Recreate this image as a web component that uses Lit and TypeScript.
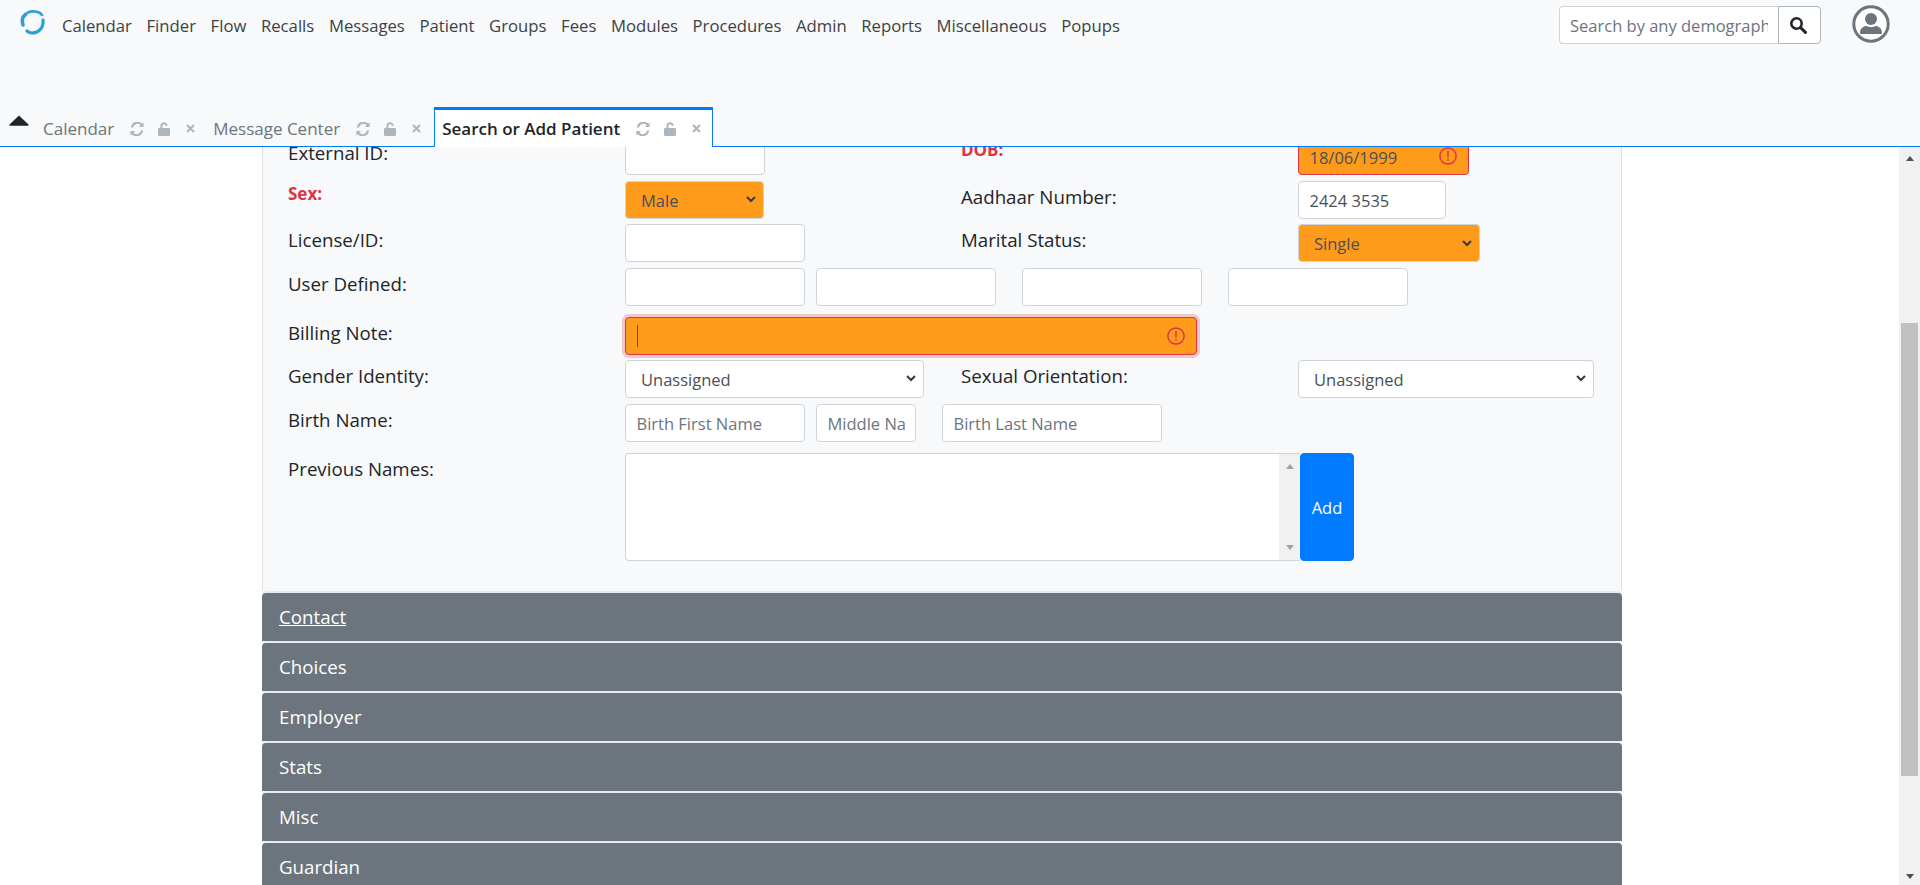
import { LitElement, html, css, svg } from "lit";
import { customElement } from "lit/decorators.js";

const NAV = ["Calendar", "Finder", "Flow", "Recalls", "Messages", "Patient", "Groups", "Fees", "Modules", "Procedures", "Admin", "Reports", "Miscellaneous", "Popups"];
const BARS = ["Contact", "Choices", "Employer", "Stats", "Misc", "Guardian"];

const syncIcon = svg`<path d="M12.2 1.8A6.500 6.500 0 0 0 .9 5.400h2.100a4.500 4.500 0 0 1 7.700-2.100L9 5h4.600V.4zM1.800 12.200A6.500 6.500 0 0 0 13.100 8.600H11a4.500 4.500 0 0 1-7.700 2.100L5 9H.4v4.600z"/>`;
const lockIcon = svg`<path d="M1.300 6h9.400A1.300 1.300 0 0 1 12 7.300v5.400A1.300 1.300 0 0 1 10.700 14H1.300A1.300 1.300 0 0 1 0 12.700V7.300A1.300 1.300 0 0 1 1.300 6zM2.400 6V3.800a3.700 3.700 0 0 1 7.200-1.100v1H7.600v-.6A1.700 1.700 0 0 0 4.400 3.800V6z"/>`;
const warnIcon = html`<svg class="warn" viewBox="0 0 12 12"><circle cx="6" cy="6" r="5.400" fill="none" stroke="#dc3545"/><path d="M6 3v3.600" stroke="#dc3545" stroke-linecap="round" fill="none"/><circle cx="6" cy="8.600" r=".6" fill="#dc3545"/></svg>`;

@customElement("app-root")
export class AppRoot extends LitElement {
  static styles = css`
    :host {
      display: block;
      height: 885px;
      overflow: hidden;
      font-family: "Open Sans", "Liberation Sans", sans-serif;
      font-size: 16.5px;
      line-height: 24px;
      color: #212529;
      background: #fff;
    }
    * {
      box-sizing: border-box;
    }
    .navbar {
      height: 147px;
      background: #f8f9fa;
      border-bottom: 1px solid #007bff;
      display: flex;
      flex-direction: column;
    }
    .topbar {
      height: 107px;
      display: flex;
      align-items: flex-start;
    }
    .logo {
      width: 27px;
      height: 27px;
      margin: 9px 0 0 19px;
    }
    .menu {
      display: flex;
      gap: 14.6px;
      margin: 14px 0 0 16px;
      flex: 1;
      color: #3d4145;
      font-size: 16.7px;
    }
    .search {
      display: flex;
      margin-top: 6px;
      width: 262px;
      height: 38px;
    }
    .search input {
      flex: 1;
      min-width: 0;
      border: 1px solid #ced4da;
      border-right: 0;
      border-radius: 4px 0 0 4px;
      padding: 7px 10px 5px;
      font: inherit;
      background: #fff;
    }
    .search input::placeholder {
      color: #6c757d;
    }
    .search button {
      width: 43px;
      border: 1px solid #adb5bd;
      border-radius: 0 4px 4px 0;
      background: #fff;
      padding: 0 3px 0 0;
      display: flex;
      align-items: center;
      justify-content: center;
    }
    .avatar {
      width: 38px;
      height: 38px;
      margin: 5px 30px 0 31px;
    }
    .tabs {
      height: 39px;
      display: flex;
      align-items: flex-start;
      font-size: 17px;
    }
    .caret {
      width: 20px;
      height: 11px;
      margin: 8px 4px 0 9px;
    }
    .tab {
      display: flex;
      align-items: center;
      height: 40px;
      padding: 3px 8px 0 10px;
      color: #6c757d;
      white-space: nowrap;
    }
    .tab.active {
      margin-left: 5px;
      padding: 0 12px 0 7px;
      background: #fff;
      border: 1px solid #007bff;
      border-top-width: 3px;
      border-bottom: 0;
      color: #212529;
      font-weight: 600;
      font-size: 17px;
      width: 279px;
    }
    .tab svg {
      fill: #adb5bd;
      flex: none;
    }
    .tab .sync {
      width: 14px;
      height: 14px;
      margin-left: 16px;
    }
    .tab .lock {
      width: 12px;
      height: 14px;
      margin-left: 14px;
    }
    .tab .x {
      width: 9px;
      height: 9px;
      margin-left: 16px;
    }
    .body {
      height: 738px;
      display: flex;
    }
    .main {
      flex: 1;
      min-width: 0;
      overflow: hidden;
      padding: 0 277px 0 262px;
    }
    .panel {
      margin-top: -10px;
      height: 454px;
      background: #f8f9fa;
      border: 1px solid #dee2e6;
      border-width: 0 1px;
      padding-left: 25px;
      display: flex;
      flex-direction: column;
    }
    .row {
      display: grid;
      grid-template-columns: 337px 336px 337px 1fr;
      margin-bottom: 5.6px;
    }
    .row.spaced {
      margin-top: 5.6px;
      margin-bottom: 5px;
    }
    .lbl {
      padding-top: 4px;
      white-space: nowrap;
      font-size: 18.7px;
    }
    .lbl.req {
      padding-top: 1px;
      color: #dc3545;
      font-weight: 700;
      font-size: 17px;
    }
    .wide {
      grid-column: 2 / span 3;
      display: flex;
    }
    .field {
      position: relative;
    }
    .field > .fc {
      width: 100%;
    }
    input.fc,
    select.fc {
      display: block;
      height: 38px;
      padding: 7px 10.5px 5px;
      font: inherit;
      color: #495057;
      background-color: #fff;
      border: 1px solid #ced4da;
      border-radius: 4px;
      outline: none;
    }
    select.fc {
      appearance: none;
      padding-left: 15px;
      background-image: url("data:image/svg+xml,%3Csvg xmlns='http://www.w3.org/2000/svg' width='10' height='7'%3E%3Cpath d='M1 1l4 4 4-4' fill='none' stroke='%23343a40' stroke-width='2'/%3E%3C/svg%3E");
      background-repeat: no-repeat;
      background-position: right 7px center;
    }
    input.fc::placeholder {
      color: #6c757d;
    }
    .fc.orange {
      background-color: #ff9b1b;
    }
    .fc.bad {
      border-color: #dc3545;
    }
    .fc.ring {
      box-shadow: 0 0 0 3px rgba(220, 53, 69, 0.25);
    }
    .warn {
      position: absolute;
      right: 12px;
      top: 10px;
      width: 18px;
      height: 18px;
    }
    .cursor {
      position: absolute;
      left: 12px;
      top: 8px;
      width: 1px;
      height: 22px;
      background: #495057;
    }
    .w140 { width: 140px; }
    .w139 { width: 139px; }
    .w148 { width: 148px; }
    .w171 { width: 171px; }
    .w180 { width: 180px; }
    .w181 { width: 181.5px; }
    .w296 { width: 296px; }
    .w299 { width: 299px; }
    .w572 { width: 572px; }
    .w100 { width: 100px; }
    .w220 { width: 220px; }
    .ml11 { margin-left: 11px; }
    .ml26 { margin-left: 26px; }
    .prev {
      display: grid;
      grid-template-columns: 337px 1fr;
      margin-top: 5.6px;
    }
    .prev-box {
      display: flex;
      height: 108px;
    }
    .area {
      width: 675px;
      background: #fff;
      border: 1px solid #ced4da;
      border-right: 0;
      border-radius: 4px 0 0 4px;
      display: flex;
      justify-content: flex-end;
    }
    .area-bar {
      width: 21px;
      background: #f1f1f1;
      display: flex;
      flex-direction: column;
      justify-content: space-between;
      align-items: center;
      padding: 10px 0;
    }
    .tri-up,
    .tri-down {
      width: 0;
      height: 0;
      border-left: 4.500px solid transparent;
      border-right: 4.500px solid transparent;
    }
    .tri-up {
      border-bottom: 5px solid #a3a3a3;
    }
    .tri-down {
      border-top: 5px solid #a3a3a3;
    }
    .add {
      width: 54px;
      background: #007bff;
      border: 1px solid #007bff;
      border-radius: 4px;
      color: #fff;
      font: inherit;
      padding: 2px 0 0;
    }
    .accordion {
      display: flex;
      flex-direction: column;
      margin-top: 2px;
    }
    .bar {
      height: 48px;
      margin-bottom: 2px;
      background: #6c757d;
      border-radius: 4px 4px 0 0;
      box-shadow: 0 -2px 0 #e9ecef;
      color: #fff;
      padding: 12px 17px;
      flex: none;
      font-size: 18.7px;
    }
    .bar.link {
      text-decoration: underline;
    }
    .scrollbar {
      width: 21px;
      background: #f1f1f1;
      display: flex;
      flex-direction: column;
      align-items: center;
    }
    .scrollbar .top,
    .scrollbar .bottom {
      height: 17px;
      display: flex;
      align-items: center;
      justify-content: center;
      flex: none;
    }
    .scrollbar .tri-up {
      border-bottom-color: #505050;
      margin-top: 6px;
    }
    .scrollbar .tri-down {
      border-top-color: #505050;
      margin-top: -1px;
    }
    .gap-a {
      height: 159px;
    }
    .thumb {
      width: 17px;
      height: 453px;
      background: #c1c1c1;
    }
    .gap-b {
      flex: 1;
    }
  `;

  render() {
    return html`
      <div class="navbar">
        <div class="topbar">
          <svg class="logo" viewBox="0 0 27 27" fill="none" stroke="#2a9fd8" stroke-linecap="round">
            <path d="M4 16C2.500 11 4 7 7 5" stroke-width="3.500" />
            <path d="M9 3.500C13 1.500 20 2 23 6" stroke-width="2.600" />
            <path d="M24 11C25 18 20 24 13 24 11 24 9.500 23.500 8 22" stroke-width="3.200" />
          </svg>
          <div class="menu">${NAV.map((n) => html`<span>${n}</span>`)}</div>
          <div class="search">
            <input placeholder="Search by any demographics" />
            <button aria-label="Search">
              <svg width="18" height="18" viewBox="0 0 18 18" fill="none" stroke="#212529">
                <circle cx="7.500" cy="7.500" r="5.200" stroke-width="2.600" />
                <path d="M11.500 11.500L16.400 16.400" stroke-width="3" stroke-linecap="round" />
              </svg>
            </button>
          </div>
          <svg class="avatar" viewBox="0 0 38 38">
            <circle cx="19" cy="19" r="17.200" fill="#fff" stroke="#6c757d" stroke-width="3" />
            <circle cx="19" cy="14" r="6" fill="#6c757d" />
            <path d="M8 28c0-5 4-7 6-7 3 1.500 7 1.500 10 0 2 0 6 2 6 7a1 1 0 0 1-1 1H9a1 1 0 0 1-1-1z" fill="#6c757d" />
          </svg>
        </div>
        <div class="tabs">
          <svg class="caret" viewBox="0 0 20 11"><path d="M10 .5L19.500 9.500a.8.800 0 0 1-.6 1.300H1.100a.8.800 0 0 1-.6-1.300z" fill="#212529" /></svg>
          ${this.tab("Calendar")} ${this.tab("Message Center")} ${this.tab("Search or Add Patient", true)}
        </div>
      </div>
      <div class="body">
        <div class="main">
          <div class="panel">
            <div class="row">
              <div class="lbl">External ID:</div>
              <div class="field w140"><input class="fc" /></div>
              <div class="lbl req">DOB:</div>
              <div class="field w171">
                <input class="fc orange bad" value="18/06/1999" />
                ${warnIcon}
              </div>
            </div>
            <div class="row">
              <div class="lbl req">Sex:</div>
              <div class="field w139"><select class="fc orange"><option>Male</option></select></div>
              <div class="lbl">Aadhaar Number:</div>
              <div class="field w148"><input class="fc" value="2424 3535" /></div>
            </div>
            <div class="row">
              <div class="lbl">License/ID:</div>
              <div class="field w180"><input class="fc" /></div>
              <div class="lbl">Marital Status:</div>
              <div class="field w181"><select class="fc orange"><option>Single</option></select></div>
            </div>
            <div class="row">
              <div class="lbl">User Defined:</div>
              <div class="wide">
                <input class="fc w180" />
                <input class="fc w180 ml11" />
                <input class="fc w180 ml26" />
                <input class="fc w180 ml26" />
              </div>
            </div>
            <div class="row spaced">
              <div class="lbl">Billing Note:</div>
              <div class="wide">
                <div class="field w572">
                  <input class="fc orange bad ring" />
                  <span class="cursor"></span>
                  ${warnIcon}
                </div>
              </div>
            </div>
            <div class="row">
              <div class="lbl">Gender Identity:</div>
              <div class="field w299"><select class="fc"><option>Unassigned</option></select></div>
              <div class="lbl">Sexual Orientation:</div>
              <div class="field w296"><select class="fc"><option>Unassigned</option></select></div>
            </div>
            <div class="row">
              <div class="lbl">Birth Name:</div>
              <div class="wide">
                <input class="fc w180" placeholder="Birth First Name" />
                <input class="fc w100 ml11" placeholder="Middle Name" />
                <input class="fc w220 ml26" placeholder="Birth Last Name" />
              </div>
            </div>
            <div class="prev">
              <div class="lbl">Previous Names:</div>
              <div class="prev-box">
                <div class="area">
                  <div class="area-bar"><span class="tri-up"></span><span class="tri-down"></span></div>
                </div>
                <button class="add">Add</button>
              </div>
            </div>
          </div>
          <div class="accordion">
            ${BARS.map((b, i) => html`<div class="bar ${i === 0 ? "link" : ""}">${b}</div>`)}
          </div>
        </div>
        <div class="scrollbar">
          <div class="top"><span class="tri-up"></span></div>
          <div class="gap-a"></div>
          <div class="thumb"></div>
          <div class="gap-b"></div>
          <div class="bottom"><span class="tri-down"></span></div>
        </div>
      </div>
    `;
  }

  tab(label: string, active = false) {
    return html`
      <div class="tab ${active ? "active" : ""}">
        <span>${label}</span>
        <svg class="sync" viewBox="0 0 14 14">${syncIcon}</svg>
        <svg class="lock" viewBox="0 0 12 14">${lockIcon}</svg>
        <svg class="x" viewBox="0 0 9 9"><path d="M1 1l7 7M8 1L1 8" stroke="#adb5bd" stroke-width="2" /></svg>
      </div>
    `;
  }
}
